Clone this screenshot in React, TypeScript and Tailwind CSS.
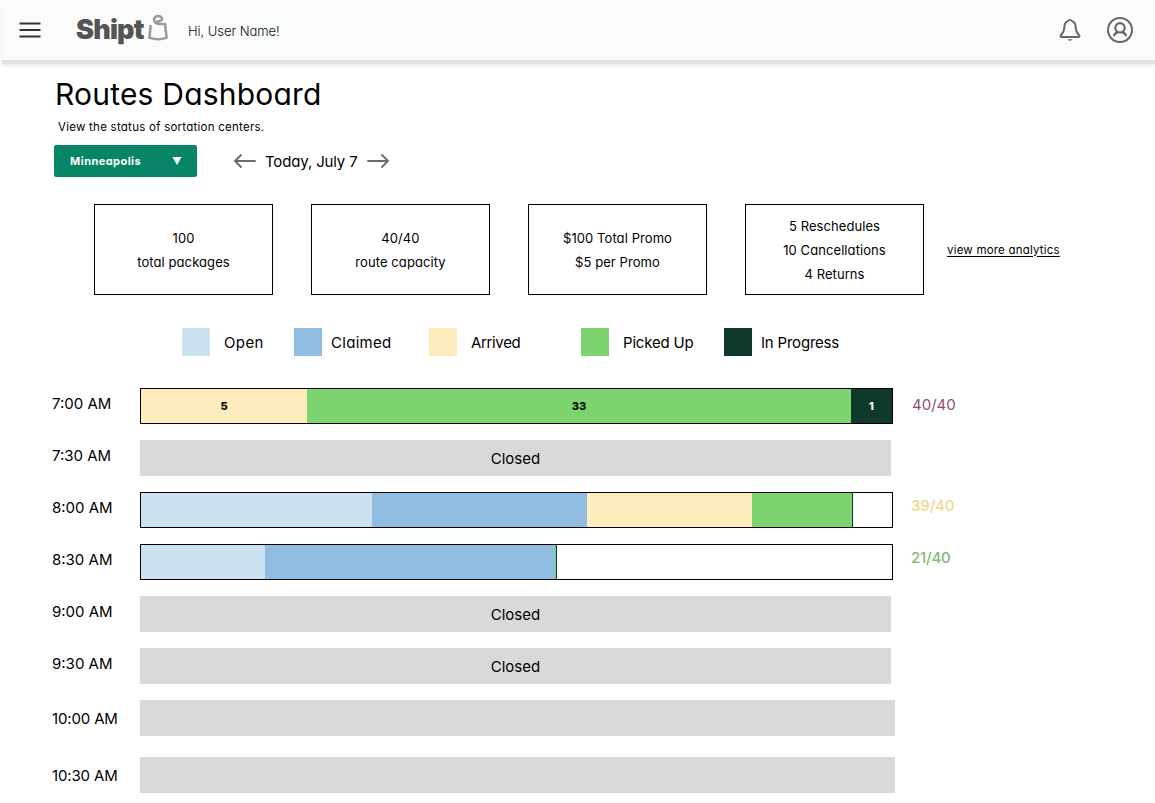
import clsx from "clsx";

type Segment = { width: number; color: string; label?: string; dark?: boolean };

type Slot = {
  time: string;
  segments?: Segment[];
  text?: string;
  capacity?: string;
  capacityClass?: string;
  barClass?: string;
  className?: string;
};

const slots: Slot[] = [
  {
    time: "7:00 AM",
    segments: [
      { width: 166, color: "bg-[#feecbd]", label: "5" },
      { width: 544, color: "bg-[#7dd36e]", label: "33" },
      { width: 41, color: "bg-[#0f392b]", label: "1", dark: true },
    ],
    capacity: "40/40",
    capacityClass: "text-[#8d5265] pt-px",
  },
  { time: "7:30 AM", text: "Closed" },
  {
    time: "8:00 AM",
    segments: [
      { width: 231, color: "bg-[#cbe1f0]" },
      { width: 215, color: "bg-[#90bee2]" },
      { width: 165, color: "bg-[#feecbd]" },
      { width: 100, color: "bg-[#7dd36e]" },
      { width: 1, color: "bg-[#0f392b]" },
    ],
    capacity: "39/40",
    capacityClass: "text-[#f0d78f] font-medium tracking-[-0.1px] -mt-0.5 -ml-px",
  },
  {
    time: "8:30 AM",
    segments: [
      { width: 124, color: "bg-[#cbe1f0]" },
      { width: 290, color: "bg-[#90bee2]" },
      { width: 1, color: "bg-[#7dd36e]" },
      { width: 1, color: "bg-[#0f392b]" },
    ],
    capacity: "21/40",
    capacityClass: "text-[#86b877] font-medium tracking-[-0.2px] -mt-0.5 -ml-px",
  },
  { time: "9:00 AM", text: "Closed" },
  { time: "9:30 AM", text: "Closed" },
  { time: "10:00 AM", barClass: "w-[755px]" },
  { time: "10:30 AM", barClass: "w-[755px]", className: "mt-[5px]" },
];

const stats = [
  ["100", "total packages"],
  ["40/40", "route capacity"],
  ["$100 Total Promo", "$5 per Promo"],
  ["5 Reschedules", "10 Cancellations", "4 Returns"],
];

const legend = [
  { label: "Open", color: "bg-[#cbe1f0]", className: "w-28 gap-3.5 tracking-[0.4px]" },
  { label: "Claimed", color: "bg-[#90bee2]", className: "w-[135px] gap-[9px] tracking-[0.3px]" },
  { label: "Arrived", color: "bg-[#feecbd]", className: "w-[152px] gap-3.5 tracking-[-0.35px]" },
  { label: "Picked Up", color: "bg-[#7dd36e]", className: "w-[143px] gap-3.5 tracking-[-0.2px]" },
  { label: "In Progress", color: "bg-[#0f392b]", className: "gap-[9px] tracking-[-0.2px]" },
];

const MenuIcon = () => (
  <svg width="22" height="16" viewBox="0 0 22 16" stroke="#333" strokeWidth="1.8">
    <path d="M0.5 1.5h21M0.5 8h21M0.5 14.5h21" />
  </svg>
);

const BagIcon = () => (
  <svg width="20" height="28" viewBox="0 0 20 28" fill="none" stroke="#9b9b9b" strokeWidth="2.6" strokeLinejoin="round">
    <path d="M2.7 11L1.4 23.6Q10 26.8 18.6 23.6L17 10H11.5C9.4 10 7.4 9.3 6.5 7.3C5.4 4.4 7.2 2 10 2C12.4 2 14.2 3.6 14 5.3C13.8 6.8 10.6 6.7 8.3 8.3" />
  </svg>
);

const BellIcon = () => (
  <svg width="22" height="24" viewBox="0 0 22 24" fill="none" stroke="#6b6464" strokeWidth="1.9" strokeLinejoin="round">
    <path d="M9.2 2.8C9.5 1.6 12.5 1.6 12.8 2.8C15.6 3.6 16.5 6.2 16.6 8.7C16.7 12.4 17.4 14.4 19.9 17C20.9 18.1 20.6 19 19.5 19H2.5C1.4 19 1.1 18.1 2.1 17C4.6 14.4 5.3 12.4 5.4 8.7C5.5 6.2 6.4 3.6 9.2 2.8Z" />
    <path d="M8.6 21.2h4.8Q11 24.2 8.6 21.2Z" fill="#6b6464" stroke="none" />
  </svg>
);

const UserIcon = () => (
  <svg width="26" height="26" viewBox="0 0 26 26" fill="none" stroke="#6b6464" strokeWidth="2" strokeLinecap="round">
    <circle cx="13" cy="13" r="12" />
    <circle cx="13" cy="10.8" r="4.7" strokeWidth="2.2" />
    <path d="M7 18.2C8 16.4 9.5 15.6 10.6 15.4M15.4 15.4C16.5 15.6 18 16.4 19 18.2" strokeWidth="2.2" />
  </svg>
);

const Arrow = ({ className }: { className?: string }) => (
  <svg className={className} width="22" height="14" viewBox="0 0 22 14" fill="none" stroke="#6b6b6b" strokeWidth="1.8" strokeLinecap="round" strokeLinejoin="round">
    <path d="M1 7h20M15 1l6 6-6 6" />
  </svg>
);

const Navbar = () => (
  <header className="ml-0.5 flex h-[60px] items-center bg-[#fafbfb] pr-[22px] pl-[17px] shadow-[0_4px_0_#e2e2e2,0_6px_4px_#e8e8e8]">
    <MenuIcon />
    <div className="ml-[35px] flex w-[92px] items-start justify-between">
      <span className="w-[70px] text-[27px] leading-[30px] font-black tracking-[-0.8px] text-[#545454]">
        Shipt
      </span>
      <div className="-mt-px">
        <BagIcon />
      </div>
    </div>
    <span className="ml-5 pt-1 text-[13px] font-light tracking-[-0.05px] text-[#111]">
      Hi, User Name!
    </span>
    <div className="ml-auto flex items-center gap-[26px]">
      <BellIcon />
      <UserIcon />
    </div>
  </header>
);

const Bar = ({ slot }: { slot: Slot }) => {
  if (slot.segments) {
    return (
      <div className="flex h-9 w-[753px] border border-black">
        {slot.segments.map((segment, i) => (
          <div
            key={i}
            className={clsx(
              "flex items-center justify-center text-[11px] font-extrabold",
              segment.color,
              segment.dark ? "text-white" : "text-black",
            )}
            style={{ width: segment.width }}
          >
            {segment.label}
          </div>
        ))}
      </div>
    );
  }

  return (
    <div
      className={clsx(
        "flex h-9 items-center justify-center bg-[#d9d9d9] pt-0.5 text-[15px]",
        slot.barClass ?? "w-[751px]",
      )}
    >
      {slot.text}
    </div>
  );
};

const App = () => {
  return (
    <div className="h-[803px] w-[1155px] overflow-hidden bg-white font-['Inter',sans-serif] text-black [font-feature-settings:'cv11']">
      <Navbar />

      <main>
        <div className="pt-[14px] pl-[55px]">
          <h1 className="text-[30px] leading-10 tracking-[0.2px]">
            Routes Dashboard
          </h1>
          <p className="mt-[5px] ml-[3px] text-[11.5px] leading-4 tracking-[0.25px]">
            View the status of sortation centers.
          </p>
        </div>

        <div className="mt-2.5 flex items-center pl-[54px]">
          <button className="flex h-8 w-[143px] items-center justify-between rounded-[2px] bg-[#088567] pr-[15px] pl-4 text-[11px] font-bold tracking-[0.45px] text-white">
            <span>Minneapolis</span>
            <svg width="10" height="8" viewBox="0 0 10 8" fill="white">
              <path d="M0.5 0h9L5 8Z" />
            </svg>
          </button>
          <Arrow className="ml-[37px] rotate-180" />
          <span className="ml-[9px] w-[93px] pt-0.5 text-[15px] tracking-[-0.15px] whitespace-nowrap">
            Today, July 7
          </span>
          <Arrow className="ml-[9px]" />
        </div>

        <div className="mt-[27px] flex items-center pl-[94px]">
          <div className="flex gap-[38px]">
            {stats.map((lines) => (
              <div
                key={lines[0]}
                className="flex h-[91px] w-[179px] flex-col items-center justify-center border border-black text-[13px] leading-6 tracking-[0.08px]"
              >
                {lines.map((line) => (
                  <span key={line}>{line}</span>
                ))}
              </div>
            ))}
          </div>
          <a className="ml-[23px] pt-0.5 text-[11.5px] tracking-[0.2px] whitespace-nowrap underline underline-offset-2">
            view more analytics
          </a>
        </div>

        <div className="mt-[33px] flex h-7 pl-[182px]">
          {legend.map((item) => (
            <div
              key={item.label}
              className={clsx("flex items-center", item.className)}
            >
              <div className={clsx("size-7", item.color)} />
              <span className="pt-0.5 text-[15px] whitespace-nowrap">
                {item.label}
              </span>
            </div>
          ))}
        </div>

        <div className="mt-8 flex flex-col gap-4 pl-[52px]">
          {slots.map((slot) => (
            <div
              key={slot.time}
              className={clsx("flex items-start", slot.className)}
            >
              <span
                className={clsx(
                  "w-[88px] text-[15px] leading-8",
                  slot.barClass && "pt-[3px] tracking-[-0.15px]",
                )}
              >
                {slot.time}
              </span>
              <Bar slot={slot} />
              {slot.capacity && (
                <span
                  className={clsx(
                    "pl-[19px] text-[15px] leading-8",
                    slot.capacityClass,
                  )}
                >
                  {slot.capacity}
                </span>
              )}
            </div>
          ))}
        </div>
      </main>
    </div>
  );
};

export default App;
